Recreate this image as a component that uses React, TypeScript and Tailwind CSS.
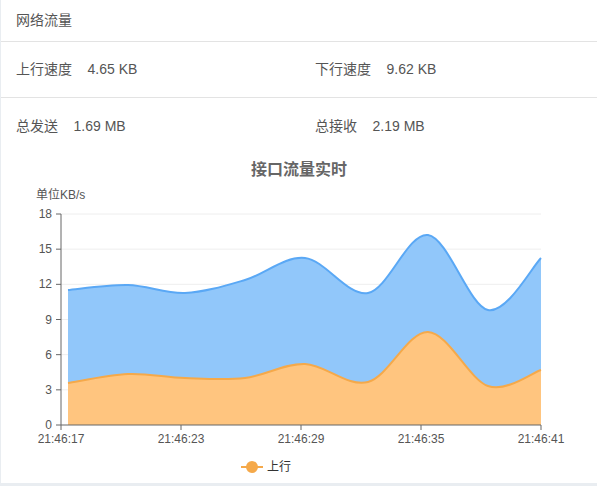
import React from "react";

const xs = [68, 128, 185, 245, 305, 368, 428, 488, 541];
const blue = [290, 285, 293, 280, 258, 293, 235, 310, 258];
const orange = [383, 374, 378, 378, 364, 382, 332, 386, 370];

function smooth(ys: number[]) {
  let d = `M${xs[0]},${ys[0]}`;
  for (let i = 0; i < xs.length - 1; i++) {
    const p0 = [xs[Math.max(i - 1, 0)], ys[Math.max(i - 1, 0)]];
    const p1 = [xs[i], ys[i]];
    const p2 = [xs[i + 1], ys[i + 1]];
    const p3 = [xs[Math.min(i + 2, xs.length - 1)], ys[Math.min(i + 2, xs.length - 1)]];
    const c1 = [p1[0] + (p2[0] - p0[0]) / 6, p1[1] + (p2[1] - p0[1]) / 6];
    const c2 = [p2[0] - (p3[0] - p1[0]) / 6, p2[1] - (p3[1] - p1[1]) / 6];
    d += ` C${c1[0]},${c1[1]} ${c2[0]},${c2[1]} ${p2[0]},${p2[1]}`;
  }
  return d;
}

export default function App() {
  const bl = smooth(blue);
  const ol = smooth(orange);
  const yt = [0, 3, 6, 9, 12, 15, 18];
  const xt = ["21:46:17", "21:46:23", "21:46:29", "21:46:35", "21:46:41"];
  return (
    <div className="w-[597px] h-[486px] bg-[#e9edf1] pl-px pb-[3px] text-[#555]" style={{ fontFamily: '"Liberation Sans","Noto Sans CJK SC",sans-serif' }}>
      <div className="bg-white h-full">
        <div className="h-[42px] border-b border-[#e3e3e3] flex items-center px-[15px] text-[14px]">网络流量</div>
        <div className="h-[56px] border-b border-[#e3e3e3] flex items-center px-[15px] text-[14px]">
          <div className="w-[299px]">上行速度&nbsp;&nbsp;&nbsp;&nbsp;4.65 KB</div>
          <div>下行速度&nbsp;&nbsp;&nbsp;&nbsp;9.62 KB</div>
        </div>
        <div className="h-[56px] flex items-center px-[15px] text-[14px]">
          <div className="w-[299px]">总发送&nbsp;&nbsp;&nbsp;&nbsp;1.69 MB</div>
          <div>总接收&nbsp;&nbsp;&nbsp;&nbsp;2.19 MB</div>
        </div>
        <svg width="596" height="328" viewBox="1 154 596 328" className="block">
          <text x="299" y="175" textAnchor="middle" fontSize="16" fontWeight="bold" fill="#666">接口流量实时</text>
          <text x="36" y="199" fontSize="12" fill="#555">单位KB/s</text>
          {yt.map((v) => {
            const y = 425 - v * (211 / 18);
            return (
              <g key={v}>
                {v > 0 && <line x1="61" x2="541" y1={y} y2={y} stroke="#eee" />}
                <line x1="56" x2="61" y1={y} y2={y} stroke="#666" />
                <text x="52" y={y + 4} textAnchor="end" fontSize="12" fill="#555">{v}</text>
              </g>
            );
          })}
          <path d={`${bl} L541,425 L68,425 Z`} fill="#91c7fa" />
          <path d={bl} fill="none" stroke="#5aa8f5" strokeWidth="2" />
          <path d={`${ol} L541,425 L68,425 Z`} fill="#ffc57f" />
          <path d={ol} fill="none" stroke="#f5a94a" strokeWidth="2" />
          <line x1="61" x2="61" y1="214" y2="425" stroke="#666" />
          <line x1="61" x2="541" y1="425" y2="425" stroke="#666" />
          {xt.map((t, i) => {
            const x = 61 + i * 120;
            return (
              <g key={t}>
                <line x1={x} x2={x} y1="425" y2="430" stroke="#666" />
                <text x={x} y="443" textAnchor="middle" fontSize="12" fill="#555">{t}</text>
              </g>
            );
          }) }
          <line x1="241" x2="263" y1="467" y2="467" stroke="#f5a94a" strokeWidth="2" />
          <circle cx="252" cy="467" r="6" fill="#f5a94a" />
          <text x="267" y="471" fontSize="12" fill="#333">上行</text>
        </svg>
      </div>
    </div>
  );
}
